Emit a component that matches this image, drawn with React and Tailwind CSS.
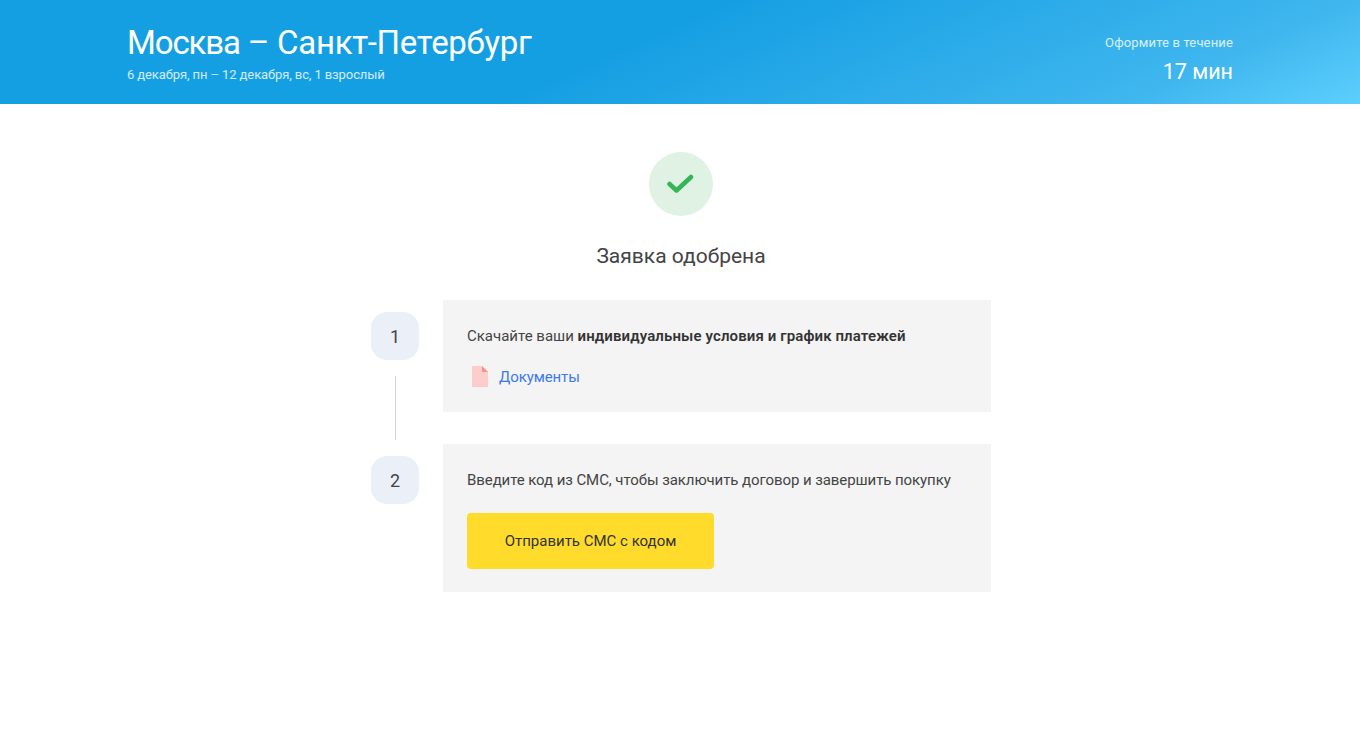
import React from 'react';

const steps = [
	{ id: 1 },
	{ id: 2 },
];

const StepBadge = ({ n }) => (
	<div className="w-12 h-12 rounded-2xl bg-[#ebf0f8] flex items-center justify-center text-[18px] text-[#444]">
		{n}
	</div>
);

const App = () => {
	return (
		<div className="min-h-[745px] bg-white font-['Roboto',sans-serif]">
			{/* Header */}
			<header className="h-[104px] bg-[linear-gradient(156deg,#159fe3_0%,#159fe3_46%,#3fb6ee_85%,#5ccffd_100%)] flex justify-between pl-[127px] pr-[127px] text-white">
				<div className="pt-[23px]">
					<h1 className="text-[33px] leading-[40px] font-normal tracking-[-0.3px]">
						<span className="tracking-[-1.1px]">Москва</span> – Санкт-Петербург
					</h1>
					<p className="mt-[4px] text-[13px] leading-[16px] tracking-[-0.1px] text-white/80">6 декабря, пн – 12 декабря, вс, 1 взрослый</p>
				</div>
				<div className="pt-[35px] text-right">
					<p className="text-[13px] leading-[16px] tracking-[0.15px] text-white/80">Оформите в течение</p>
					<p className="mt-[7px] text-[21.5px] leading-[28px]">17 мин</p>
				</div>
			</header>

			{/* Status */}
			<div className="flex flex-col items-center pt-[48px] pl-[2px]">
				<div className="w-16 h-16 rounded-full bg-[#dff2e3] flex items-center justify-center">
					<svg width="28" height="22" viewBox="0 0 28 22" fill="none">
						<path d="M2.5 11L9.5 17.5L24 4" stroke="#34b556" strokeWidth="4.5" strokeLinecap="round" strokeLinejoin="round" />
					</svg>
				</div>
				<h2 className="mt-[26px] text-[21px] leading-[28px] text-[#444] font-normal">Заявка одобрена</h2>
			</div>

			{/* Steps */}
			<div className="w-[620px] ml-[371px] mt-[30px] flex flex-col gap-8">
				<div className="flex gap-6">
					<div className="relative pt-3">
						<StepBadge n={steps[0].id} />
						<div className="absolute left-[24px] top-[76px] w-px h-16 bg-[#d4d4d4]"></div>
					</div>
					<div className="flex-1 h-[112px] bg-[#f4f4f4] pl-6 pt-[26px]">
						<p className="text-[15px] leading-5 text-[#444]">
							Скачайте ваши <span className="font-semibold tracking-[0.12px] text-[#333]">индивидуальные условия и график платежей</span>
						</p>
						<div className="mt-[20px] flex items-center gap-[11px] pl-[5px]">
							<svg width="16" height="21" viewBox="0 0 16 21">
								<path d="M1 0H10L16 6V20a1 1 0 0 1-1 1H1a1 1 0 0 1-1-1V1a1 1 0 0 1 1-1Z" fill="#fdcdcb" />
								<path d="M10 0L16 6H11a1 1 0 0 1-1-1Z" fill="#fb8f8b" />
							</svg>
							<a className="text-[15px] leading-5 tracking-[-0.1px] text-[#3d78f2]">Документы</a>
						</div>
					</div>
				</div>
				<div className="flex gap-6">
					<div className="pt-3">
						<StepBadge n={steps[1].id} />
					</div>
					<div className="flex-1 h-[148px] bg-[#f4f4f4] pl-6 pt-[26px]">
						<p className="text-[15px] leading-5 tracking-[-0.08px] text-[#444]">Введите код из СМС, чтобы заключить договор и завершить покупку</p>
						<button className="mt-[23px] w-[247px] h-14 rounded bg-[#ffdc2b] text-[15px] text-[#333]">Отправить СМС с кодом</button>
					</div>
				</div>
			</div>
		</div>
	);
};

export default App;
